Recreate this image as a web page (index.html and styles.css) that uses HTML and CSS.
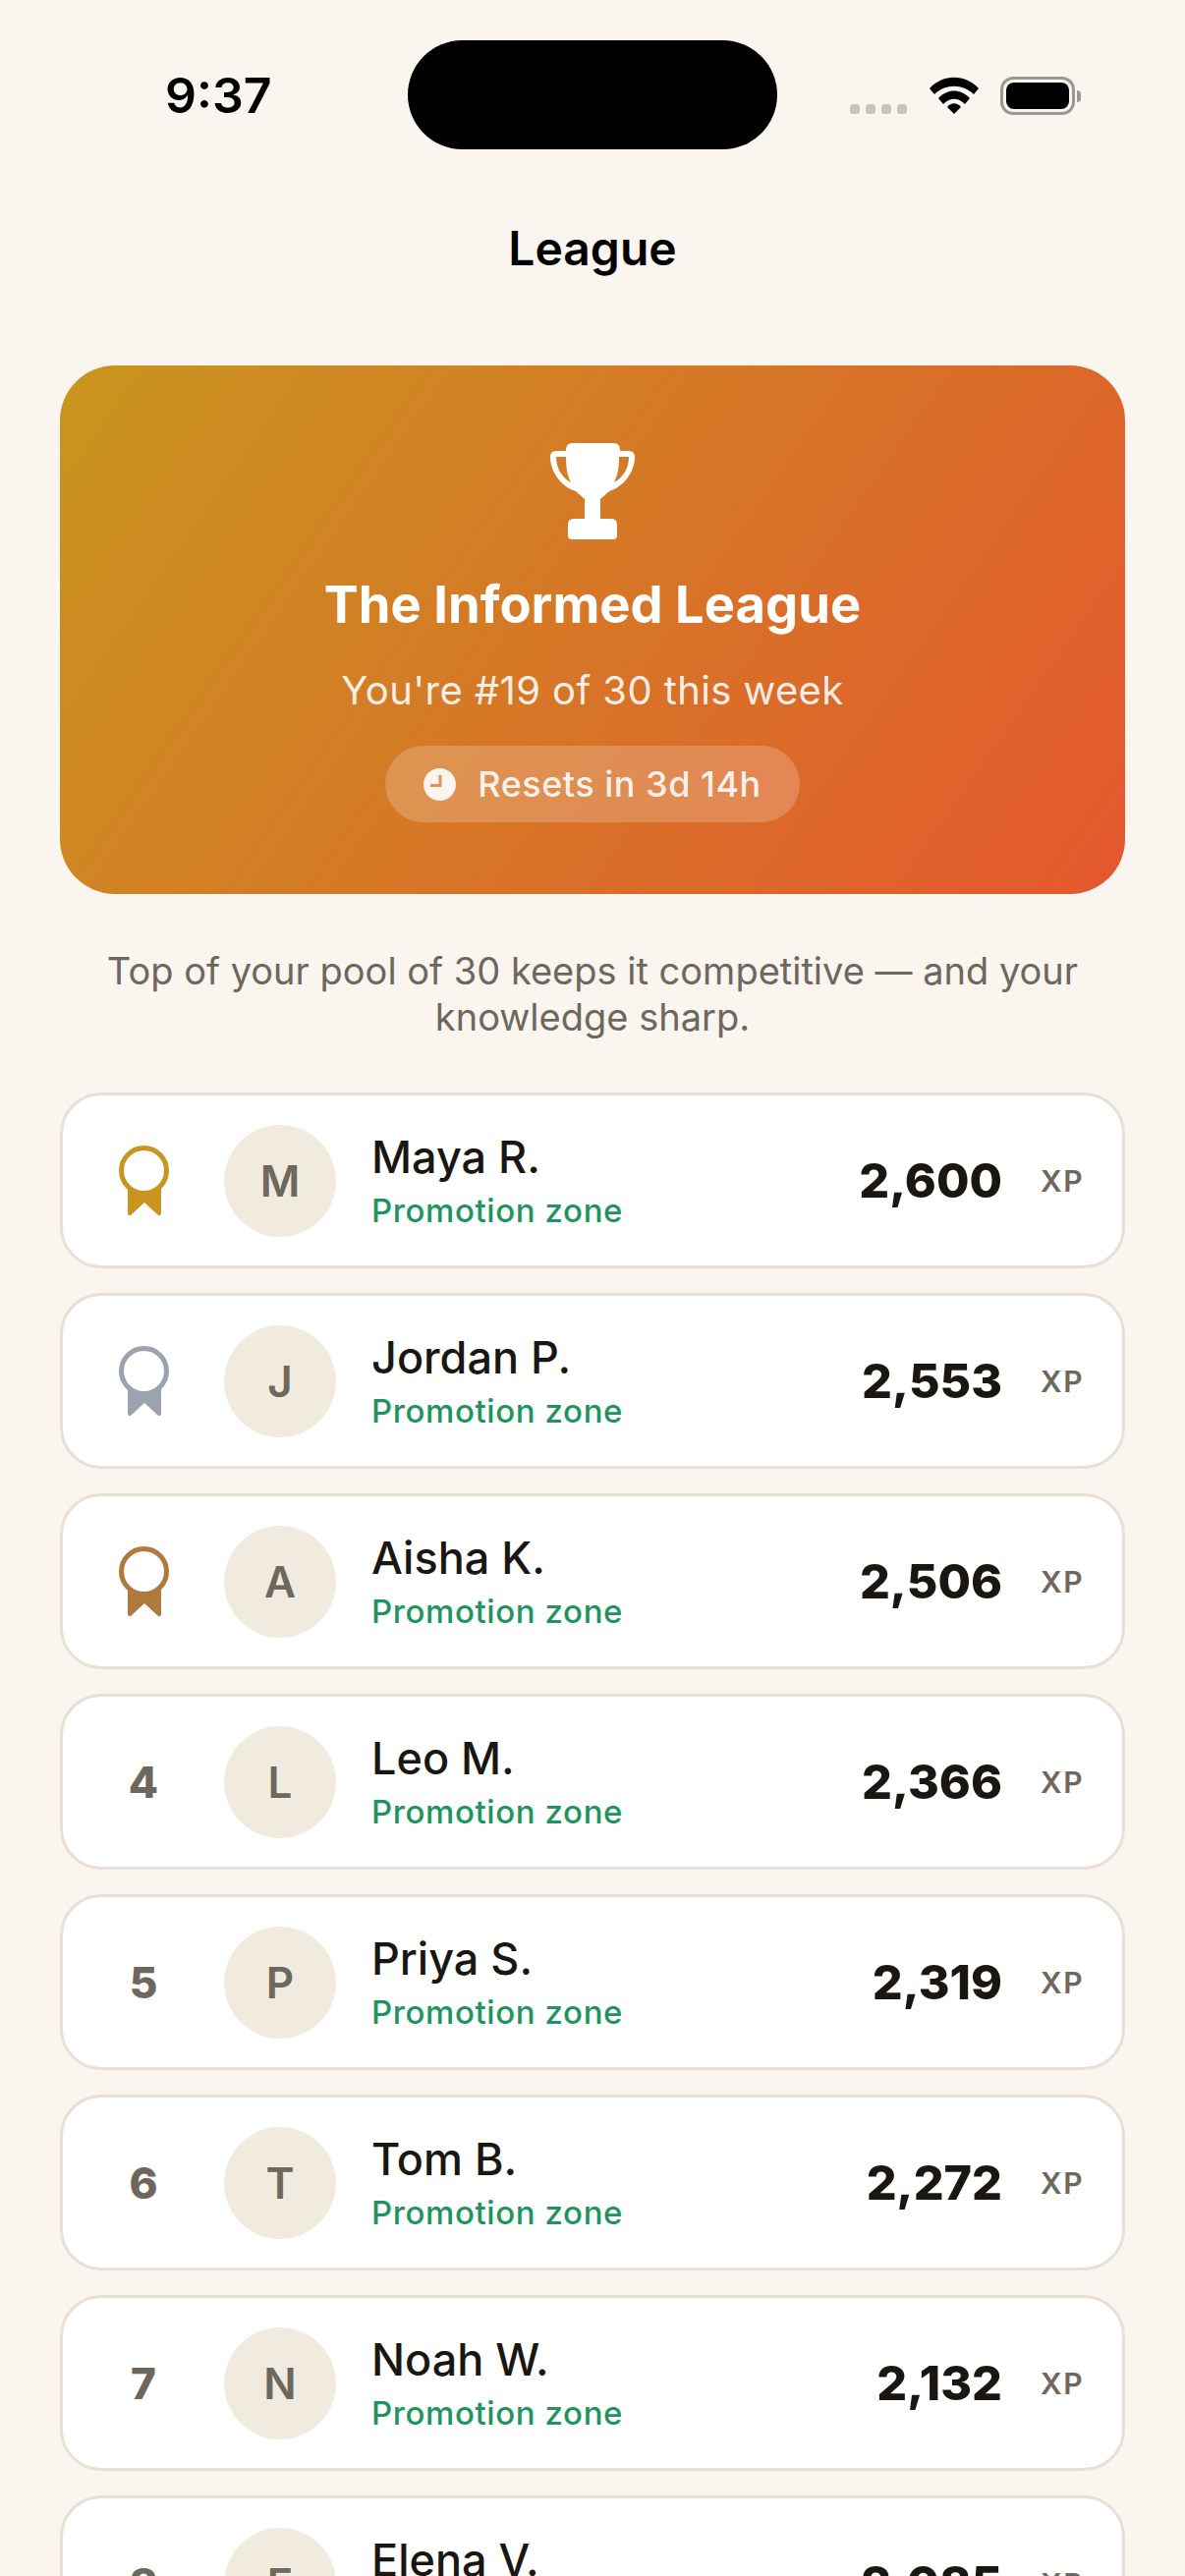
FILE: index.html
```html
<!DOCTYPE html>
<html>
<head>
<meta charset="utf-8">
	<title>League</title>
	<link rel="stylesheet" href="styles.css">
</head>
<body>
	<div class="status">
		<div class="time">9:37</div>
		<div class="island"></div>
		<div class="status-icons">
			<div class="dots"><span></span><span></span><span></span><span></span></div>
			<svg class="wifi" viewBox="0 0 50 38" width="50" height="38">
				<path d="M0 12 C14 -3 36 -3 50 12 L45 18 C34 7 16 7 5 18 Z"/>
				<path d="M9 22 C18 12 32 12 41 22 L36 28 C29 21 21 21 14 28 Z"/>
				<path d="M18 31 C22 26 28 26 32 31 L25 38 Z"/>
			</svg>
			<div class="battery"><div class="battery-fill"></div></div>
			<div class="battery-cap"></div>
		</div>
	</div>
	<h1 class="nav-title">League</h1>

	<div class="hero">
		<svg class="trophy" viewBox="0 0 86 98" width="86" height="98">
			<path d="M22 0 H65 Q70 0 71 6 V8 H80 Q86 8 86 14 C86 30 74 45 60 49 L51 57 V77 H62 Q68 77 68 83 V94 Q68 98 64 98 H22 Q18 98 18 94 V83 Q18 77 24 77 H35 V57 L26 49 C12 45 0 30 0 14 Q0 8 6 8 H16 V6 Q17 0 22 0 Z M16 14 H6 C6 26 12 35 21 40 C17 32 16 24 16 14 Z M70 14 C70 24 69 32 65 40 C74 35 80 26 80 14 Z" fill-rule="evenodd"/>
		</svg>
		<h2 class="hero-title">The Informed League</h2>
		<p class="hero-sub">You're #19 of 30 this week</p>
		<div class="pill">
			<svg class="clock" viewBox="0 0 33 33" width="33" height="33">
				<path d="M16.5 0 A16.5 16.5 0 1 0 16.5 33 A16.5 16.5 0 1 0 16.5 0 Z M15.5 7 H18.5 V19 H7 V16 H15.5 Z" fill-rule="evenodd"/>
			</svg>
			<span>Resets in 3d 14h</span>
		</div>
	</div>

	<p class="note">Top of your pool of 30 keeps it competitive — and your knowledge sharp.</p>

	<div class="list">
		<div class="row">
			<div class="rank">
				<svg class="medal gold" viewBox="0 0 51 72" width="51" height="72">
					<path class="ribbon" d="M9 40 H43 V69 Q42 73 39 70 L26 58 L13 70 Q10 73 9 69 Z"/>
					<circle class="ring" cx="25.5" cy="25.5" r="23"/>
				</svg>
			</div>
			<div class="avatar">M</div>
			<div class="who"><div class="name">Maya R.</div><div class="zone">Promotion zone</div></div>
			<div class="xp">2,600</div>
			<div class="xp-label">XP</div>
		</div>
		<div class="row">
			<div class="rank">
				<svg class="medal silver" viewBox="0 0 51 72" width="51" height="72">
					<path class="ribbon" d="M9 40 H43 V69 Q42 73 39 70 L26 58 L13 70 Q10 73 9 69 Z"/>
					<circle class="ring" cx="25.5" cy="25.5" r="23"/>
				</svg>
			</div>
			<div class="avatar">J</div>
			<div class="who"><div class="name">Jordan P.</div><div class="zone">Promotion zone</div></div>
			<div class="xp">2,553</div>
			<div class="xp-label">XP</div>
		</div>
		<div class="row">
			<div class="rank">
				<svg class="medal bronze" viewBox="0 0 51 72" width="51" height="72">
					<path class="ribbon" d="M9 40 H43 V69 Q42 73 39 70 L26 58 L13 70 Q10 73 9 69 Z"/>
					<circle class="ring" cx="25.5" cy="25.5" r="23"/>
				</svg>
			</div>
			<div class="avatar">A</div>
			<div class="who"><div class="name">Aisha K.</div><div class="zone">Promotion zone</div></div>
			<div class="xp">2,506</div>
			<div class="xp-label">XP</div>
		</div>
		<div class="row">
			<div class="rank">4</div>
			<div class="avatar">L</div>
			<div class="who"><div class="name">Leo M.</div><div class="zone">Promotion zone</div></div>
			<div class="xp">2,366</div>
			<div class="xp-label">XP</div>
		</div>
		<div class="row">
			<div class="rank">5</div>
			<div class="avatar">P</div>
			<div class="who"><div class="name">Priya S.</div><div class="zone">Promotion zone</div></div>
			<div class="xp">2,319</div>
			<div class="xp-label">XP</div>
		</div>
		<div class="row">
			<div class="rank">6</div>
			<div class="avatar">T</div>
			<div class="who"><div class="name">Tom B.</div><div class="zone">Promotion zone</div></div>
			<div class="xp">2,272</div>
			<div class="xp-label">XP</div>
		</div>
		<div class="row">
			<div class="rank">7</div>
			<div class="avatar">N</div>
			<div class="who"><div class="name">Noah W.</div><div class="zone">Promotion zone</div></div>
			<div class="xp">2,132</div>
			<div class="xp-label">XP</div>
		</div>
		<div class="row">
			<div class="rank">8</div>
			<div class="avatar">E</div>
			<div class="who"><div class="name">Elena V.</div><div class="zone">Promotion zone</div></div>
			<div class="xp">2,085</div>
			<div class="xp-label">XP</div>
		</div>
	</div>
</body>
</html>
```
FILE: styles.css
```css
*{
	margin: 0;
	padding: 0;
	box-sizing: border-box;
}
html,body{
	height: 2622px;
	overflow: hidden;
}
body{
	background: #FAF5EF;
	font-family: Inter, "Liberation Sans", sans-serif;
	color: #1A1712;
}
.status{
	display: flex;
	align-items: flex-start;
	padding-top: 41px;
	height: 152px;
}
.time{
	width: 415px;
	padding: 28px 0 0 168px;
	font-size: 50px;
	line-height: 56px;
	font-weight: 600;
	color: #000;
}
.island{
	width: 376px;
	height: 111px;
	border-radius: 56px;
	background: #000;
}
.status-icons{
	display: flex;
	align-items: flex-end;
	margin: 37px 0 0 74px;
	height: 39px;
}
.dots{
	display: flex;
	gap: 6px;
	margin-bottom: 1px;
}
.dots span{
	width: 10px;
	height: 10px;
	border-radius: 3px;
	background: #C8C5BD;
}
.wifi{
	margin: 0 22px 1px 23px;
	fill: #000;
}
.battery{
	width: 76px;
	height: 39px;
	border: 3px solid #9B9891;
	border-radius: 13px;
	padding: 3px;
}
.battery-fill{
	width: 100%;
	height: 100%;
	background: #000;
	border-radius: 8px;
}
.battery-cap{
	width: 4px;
	height: 12px;
	margin: 0 0 13px 2px;
	background: #9B9891;
	border-radius: 0 4px 4px 0;
}
.nav-title{
	margin-top: 71px;
	text-align: center;
	font-size: 48px;
	line-height: 60px;
	font-weight: 600;
	color: #000;
}
.hero{
	margin: 89px 61px 0;
	height: 538px;
	border-radius: 56px;
	background: linear-gradient(125deg, #C9951F 0%, #E4572E 100%);
	display: flex;
	flex-direction: column;
	align-items: center;
	padding-top: 79px;
	color: #fff;
}
.trophy{
	fill: #fff;
}
.hero-title{
	margin-top: 34px;
	font-size: 52.5px;
	line-height: 64px;
	font-weight: 700;
}
.hero-sub{
	margin-top: 32px;
	font-size: 40px;
	line-height: 48px;
	font-weight: 400;
	letter-spacing: 0.4px;
	color: rgba(255,255,255,0.88);
}
.pill{
	margin-top: 32px;
	height: 78px;
	padding: 0 39px;
	border-radius: 39px;
	background: rgba(255,255,255,0.2);
	display: flex;
	align-items: center;
	gap: 22px;
	font-size: 36px;
	font-weight: 500;
	letter-spacing: 0.5px;
	color: rgba(255,255,255,0.9);
}
.clock{
	fill: rgba(255,255,255,0.9);
}
.note{
	margin: 55px 90px 0;
	text-align: center;
	font-size: 38px;
	line-height: 47px;
	color: #6E675D;
}
.list{
	margin: 53px 61px 0;
	display: flex;
	flex-direction: column;
	gap: 25px;
}
.row{
	height: 179px;
	flex: none;
	background: #fff;
	border: 3px solid #E8E0D5;
	border-radius: 42px;
	display: flex;
	align-items: center;
	padding: 0 39px 0 25px;
}
.rank{
	width: 114px;
	margin-right: 25px;
	text-align: center;
	font-size: 44px;
	font-weight: 800;
	color: #6E675D;
	display: flex;
	justify-content: center;
}
.medal{
	display: block;
}
.gold{ color: #C8951F; }
.silver{ color: #9CA3AF; }
.bronze{ color: #B07A3F; }
.medal .ribbon{
	fill: currentColor;
}
.medal .ring{
	stroke: currentColor;
	stroke-width: 5;
	fill: #fff;
}
.avatar{
	width: 114px;
	height: 114px;
	border-radius: 50%;
	background: #F1EBDF;
	color: #6E675D;
	font-size: 44px;
	font-weight: 600;
	display: flex;
	align-items: center;
	justify-content: center;
	flex: none;
}
.who{
	margin: 1px 0 0 36px;
	flex: 1;
}
.name{
	font-size: 45px;
	line-height: 54px;
	font-weight: 500;
}
.zone{
	margin-top: 6px;
	font-size: 33px;
	line-height: 42px;
	font-weight: 500;
	letter-spacing: 0.6px;
	color: #1F9460;
}
.xp{
	font-size: 48.5px;
	font-weight: 800;
	color: #1A1712;
}
.xp-label{
	margin-left: 39px;
	font-size: 30px;
	font-weight: 600;
	letter-spacing: 1.5px;
	color: #6E675D;
}
```
